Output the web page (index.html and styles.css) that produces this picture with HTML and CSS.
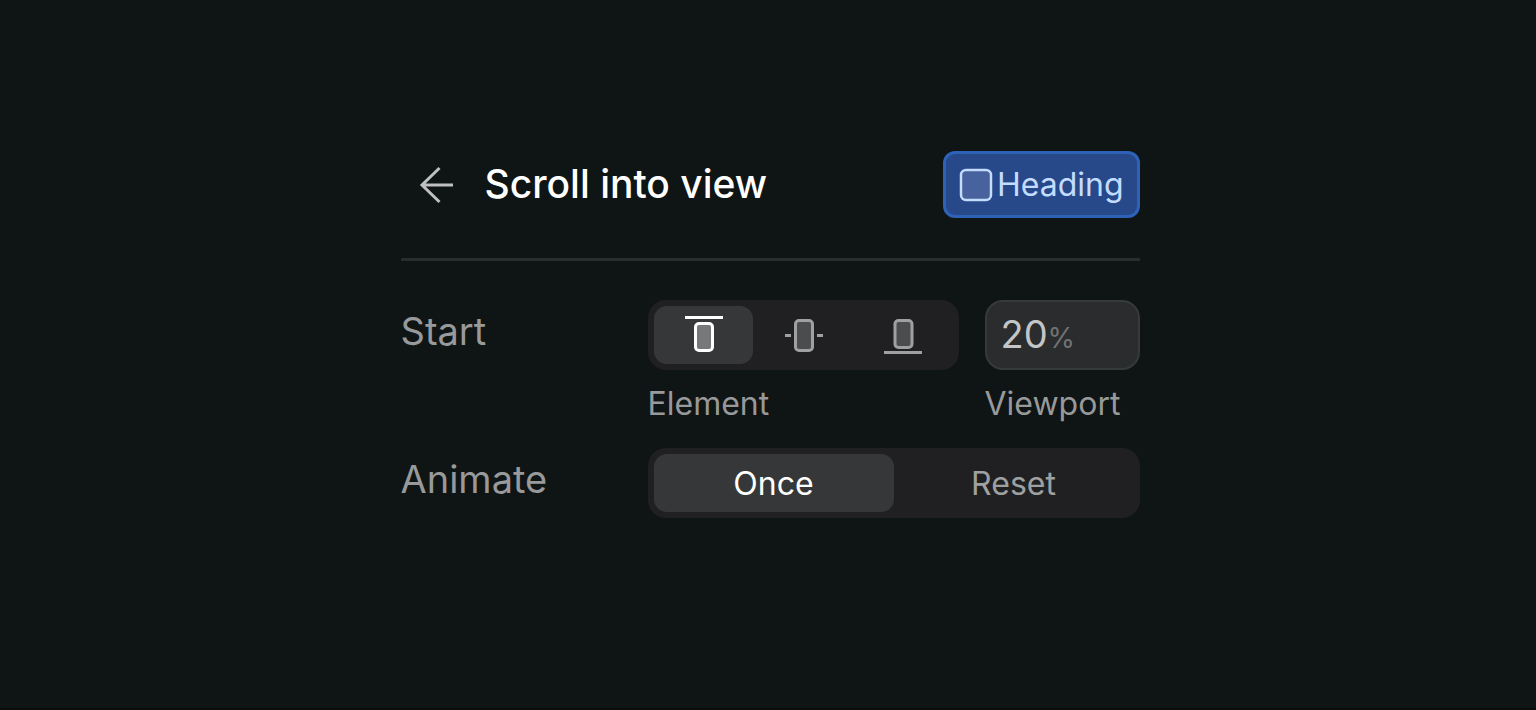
FILE: index.html
```
<!DOCTYPE html>
<html lang="en">
<head>
<meta charset="utf-8">
<meta name="viewport" content="width=device-width, initial-scale=1">
<title>Scroll into view</title>
<link rel="stylesheet" href="styles.css">
</head>
<body>
<main class="panel">
  <header class="header">
    <button class="back" type="button" aria-label="Back">
      <svg width="34" height="38" viewBox="0 0 34 38" fill="none" stroke="currentColor" stroke-width="3"><path d="M20.500 2 3 19l17.500 17M3 19h31"/></svg>
    </button>
    <h1 class="title">Scroll into view</h1>
    <button class="target" type="button">
      <svg width="34" height="34" viewBox="0 0 34 34"><rect x="2" y="2" width="30" height="30" rx="5" fill="#47629c" stroke="#c3dcff" stroke-width="2.500"/></svg>
      <span>Heading</span>
    </button>
  </header>
  <section class="settings">
    <span class="label" id="start">Start</span>
    <div class="field">
      <div class="segments" role="group" aria-labelledby="start">
        <button class="segment active" type="button" aria-label="Top" aria-pressed="true">
          <svg width="40" height="40" viewBox="0 0 40 40" fill="none" stroke="currentColor" stroke-width="3"><path d="M2 2.500h38"/><rect x="12.500" y="8.500" width="17" height="27" rx="3.500" fill="#77787a"/></svg>
        </button>
        <button class="segment" type="button" aria-label="Center" aria-pressed="false">
          <svg width="40" height="40" viewBox="0 0 40 40" fill="none" stroke="currentColor" stroke-width="3"><path d="M2 20.500h6M34 20.500h6"/><rect x="12.500" y="5.500" width="17" height="30" rx="3.500" fill="#4b4c4e"/></svg>
        </button>
        <button class="segment" type="button" aria-label="Bottom" aria-pressed="false">
          <svg width="40" height="40" viewBox="0 0 40 40" fill="none" stroke="currentColor" stroke-width="3"><path d="M1 37.500h38"/><rect x="12" y="5.500" width="17" height="27" rx="3.500" fill="#4b4c4e"/></svg>
        </button>
      </div>
      <span class="caption">Element</span>
    </div>
    <div class="field">
      <div class="amount">
        <input class="number" id="viewport" type="text" inputmode="numeric" value="20">
        <span class="unit">%</span>
      </div>
      <label class="caption" for="viewport">Viewport</label>
    </div>
    <span class="label" id="animate">Animate</span>
    <div class="segments wide" role="group" aria-labelledby="animate">
      <button class="segment active" type="button" aria-pressed="true">Once</button>
      <button class="segment" type="button" aria-pressed="false">Reset</button>
    </div>
  </section>
</main>
</body>
</html>
```
FILE: styles.css
```
* {
  box-sizing: border-box;
}

body {
  margin: 0;
  min-height: 100vh;
  padding: 151px 16px 40px 20px;
  background: #0f1414;
  border-bottom: 2px solid #0b0c0d;
  color: #98999a;
  font-family: Inter, "Liberation Sans", sans-serif;
}

button,
input {
  margin: 0;
  padding: 0;
  border: 0;
  background: none;
  color: inherit;
  font: inherit;
}

svg {
  display: block;
  flex: none;
}

.panel {
  max-width: 739px;
  margin: 0 auto;
}

.header {
  display: flex;
  align-items: center;
  padding-bottom: 40px;
  border-bottom: 3px solid #292c2d;
}

.back {
  margin: 0 32px 0 18px;
  color: #bfc0c1;
}

.title {
  flex: 1;
  margin: 0;
  color: #fff;
  font-size: 39px;
  font-weight: 500;
  line-height: 46px;
  padding-bottom: 2px;
}

.target {
  display: flex;
  align-items: center;
  gap: 4px;
  height: 67px;
  padding: 0 13px;
  border: 3px solid #2e62b8;
  border-radius: 12px;
  background: #274989;
  color: #c3dcff;
  font-size: 32px;
}

.settings {
  display: grid;
  grid-template-columns: 1fr 311px 155px;
  column-gap: 26px;
  row-gap: 24px;
  padding-top: 39px;
}

.label {
  padding-top: 7px;
  font-size: 38px;
  line-height: 48px;
}

.field {
  display: flex;
  flex-direction: column;
  gap: 14px;
}

.segments {
  display: grid;
  grid-auto-flow: column;
  grid-auto-columns: 1fr;
  height: 70px;
  padding: 6px;
  border-radius: 18px;
  background: #202022;
}

.wide {
  grid-column: 2 / 4;
}

.segment {
  display: flex;
  align-items: center;
  justify-content: center;
  border-radius: 13px;
  color: #9fa0a1;
  font-size: 32px;
}

.active {
  background: #363739;
  color: #fff;
}

.amount {
  display: flex;
  align-items: baseline;
  height: 70px;
  padding: 7px 14px;
  border: 2px solid #363a3b;
  border-radius: 18px;
  background: #2a2c2d;
}

.number {
  width: 47px;
  height: 50px;
  color: #c4c5c6;
  font-size: 38px;
}

.unit {
  color: #717273;
  font-size: 28px;
}

.caption {
  font-size: 32px;
  line-height: 40px;
}
```
